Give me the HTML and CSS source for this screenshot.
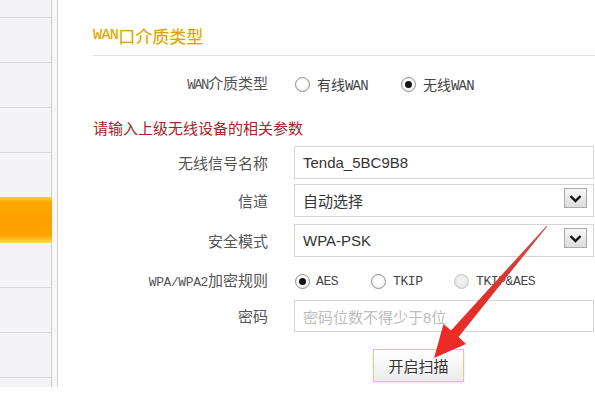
FILE: index.html
```html
<!DOCTYPE html>
<html lang="zh-CN">
<head>
<meta charset="utf-8">
<title>WAN口介质类型</title>
<link rel="stylesheet" href="styles.css">
</head>
<body>
<div class="page">
  <aside class="sidebar">
    <div class="nav-item first"></div>
    <div class="nav-item"></div>
    <div class="nav-item"></div>
    <div class="nav-item"></div>
    <div class="nav-item"></div>
    <div class="nav-item active"></div>
    <div class="nav-item"></div>
    <div class="nav-item"></div>
    <div class="nav-item"></div>
    <div class="nav-item last"></div>
  </aside>
  <div class="gutter"></div>
  <main class="content">
    <h2 class="title"><span class="mono t-wan">WAN</span>口介质类型</h2>

    <div class="row row-wan">
      <div class="label"><span class="mono l-wan">WAN</span>介质类型</div>
      <div class="radios">
        <span class="opt opt-wired"><span class="radio"></span><span class="opt-text">有线<span class="mono o-wan">WAN</span></span></span>
        <span class="opt"><span class="radio checked"></span><span class="opt-text">无线<span class="mono o-wan">WAN</span></span></span>
      </div>
    </div>

    <p class="heading">请输入上级无线设备的相关参数</p>

    <div class="row row-ssid">
      <div class="label">无线信号名称</div>
      <div class="field"><span class="value">Tenda_5BC9B8</span></div>
    </div>

    <div class="row row-chan">
      <div class="label">信道</div>
      <div class="field"><span class="value">自动选择</span><span class="dd"><svg width="13" height="9" viewBox="0 0 13 9"><path d="M1.5 2 L6.5 7 L11.5 2" fill="none" stroke="#111" stroke-width="2.4"/></svg></span></div>
    </div>

    <div class="row row-sec">
      <div class="label">安全模式</div>
      <div class="field"><span class="value">WPA-PSK</span><span class="dd"><svg width="13" height="9" viewBox="0 0 13 9"><path d="M1.5 2 L6.5 7 L11.5 2" fill="none" stroke="#111" stroke-width="2.4"/></svg></span></div>
    </div>

    <div class="row row-wpa">
      <div class="label"><span class="mono l-wpa">WPA/WPA2</span>加密规则</div>
      <div class="radios">
        <span class="opt opt-aes"><span class="radio checked"></span><span class="mono o-enc">AES</span></span>
        <span class="opt opt-tkip"><span class="radio"></span><span class="mono o-enc">TKIP</span></span>
        <span class="opt"><span class="radio disabled"></span><span class="mono o-enc">TKIP&amp;AES</span></span>
      </div>
    </div>

    <div class="row row-pwd">
      <div class="label">密码</div>
      <div class="field"><span class="value placeholder">密码位数不得少于8位</span></div>
    </div>

    <div class="row row-btn">
      <div></div>
      <button class="btn" type="button">开启扫描</button>
    </div>
  </main>

  <svg class="arrow" width="595" height="419" viewBox="0 0 595 419">
    <defs>
      <linearGradient id="ag" x1="1" y1="0" x2="0" y2="1">
        <stop offset="0" stop-color="#c8514c"/>
        <stop offset="0.5" stop-color="#e0302a"/>
        <stop offset="1" stop-color="#ee2a24"/>
      </linearGradient>
    </defs>
    <polygon fill="url(#ag)" points="546.6,225.7 547.4,226.3 458.5,337 466,344 434,358 443.5,324 451,330.5"/>
  </svg>
</div>
</body>
</html>
```

FILE: styles.css
```css
body {
  margin: 0;
  background: #ffffff;
  font-family: "Noto Sans CJK SC", sans-serif;
}

.page {
  position: relative;
  display: flex;
  width: 595px;
  height: 387px;
  overflow: hidden;
}

.sidebar {
  flex: none;
  width: 51px;
  display: flex;
  flex-direction: column;
  background: #f4f4f6;
  border-right: 1px solid #cdcdd1;
}

.nav-item {
  flex: none;
  height: 44px;
  border-bottom: 1px solid #dadade;
}

.nav-item.first {
  height: 17px;
}

.nav-item.last {
  flex: 1;
  border-bottom: none;
}

.nav-item.active {
  width: 53px;
  margin-top: -1px;
  height: 45px;
  border-bottom: 1px solid #ffd960;
  background: linear-gradient(#ffd23a 0%, #ffa800 12%, #ffa000 50%, #ffa400 85%, #ffcf45 100%);
}

.gutter {
  flex: none;
  width: 5px;
  background: #f7f7f7;
  border-right: 1px solid #d2d2d2;
}

.content {
  flex: 1;
  padding-left: 35px;
}

.mono {
  font-family: "Liberation Mono", monospace;
}

.title {
  margin: 0;
  height: 20px;
  padding-top: 26px;
  padding-bottom: 9px;
  line-height: 20px;
  font-size: 17px;
  font-weight: normal;
  color: #d9a11a;
  text-shadow: 0 0 2px #fff07a;
  border-bottom: 1px solid #e2e2e2;
  display: flex;
  align-items: center;
}

.t-wan {
  font-size: 15px;
  letter-spacing: -0.6px;
}

.row {
  display: grid;
  grid-template-columns: 175px 300px;
  grid-template-rows: 100%;
  column-gap: 26px;
  align-items: center;
}

.label {
  text-align: right;
  font-size: 15px;
  line-height: 20px;
  color: #555555;
}

.l-wan {
  font-size: 14px;
  letter-spacing: -1.5px;
}

.l-wpa {
  font-size: 13px;
  letter-spacing: -0.4px;
}

.row-wan {
  margin-top: 13px;
  height: 30px;
}

.heading {
  margin: 14px 0 0;
  height: 30px;
  line-height: 30px;
  font-size: 15px;
  color: #a3262a;
}

.row-ssid {
  margin-top: 3px;
  height: 33px;
}

.row-chan {
  margin-top: 5px;
  height: 33px;
}

.row-sec {
  margin-top: 7px;
  height: 33px;
}

.row-wpa {
  margin-top: 9px;
  height: 30px;
}

.row-pwd {
  margin-top: 4px;
  height: 32px;
}

.row-btn {
  margin-top: 17px;
  height: 33px;
}

.radios {
  display: flex;
  align-items: center;
  padding-left: 1px;
}

.opt {
  display: inline-flex;
  align-items: center;
  gap: 7px;
  font-size: 14px;
  color: #444444;
}

.opt-wired {
  width: 106px;
}

.opt-aes {
  width: 76px;
  gap: 6px;
}

.opt-tkip {
  width: 83px;
}

.o-wan {
  font-size: 14px;
  letter-spacing: -0.8px;
}

.o-enc {
  font-size: 13px;
  letter-spacing: -0.4px;
}

.radio {
  box-sizing: border-box;
  width: 15px;
  height: 15px;
  border-radius: 50%;
  border: 1px solid #8d8d8d;
  background: radial-gradient(circle at 50% 40%, #ffffff 40%, #e4e4e4 100%);
  display: inline-flex;
  align-items: center;
  justify-content: center;
}

.radio.checked::after {
  content: "";
  width: 7px;
  height: 7px;
  border-radius: 50%;
  background: #141414;
}

.radio.disabled {
  border-color: #c4c4c4;
  background: radial-gradient(circle at 50% 40%, #f0f0f0 30%, #dadada 100%);
}

.field {
  box-sizing: border-box;
  height: 100%;
  border: 1px solid #d6d6d6;
  padding-left: 8px;
  display: flex;
  align-items: center;
  font-family: "Liberation Sans", "Noto Sans CJK SC", sans-serif;
  font-size: 15px;
  color: #333333;
  background: #ffffff;
}

.value {
  flex: 1;
}

.placeholder {
  color: #bdbdbd;
}

.dd {
  align-self: flex-start;
  box-sizing: border-box;
  width: 23px;
  height: 20px;
  margin: 3px 6px 0 0;
  border: 1px solid #a9a9a9;
  background: linear-gradient(#f6f6f6, #dddddd);
  display: flex;
  align-items: center;
  justify-content: center;
}

.btn {
  justify-self: start;
  margin-left: 79px;
  width: 91px;
  height: 33px;
  padding: 0;
  border: 1px solid #e2c98c;
  background: linear-gradient(#ffffff, #ebebeb);
  box-shadow: 0 1px 2px rgba(0, 0, 0, 0.12);
  font-family: "Noto Sans CJK SC", sans-serif;
  font-size: 15px;
  color: #333333;
}

.arrow {
  position: absolute;
  left: 0;
  top: 0;
  pointer-events: none;
}
```
